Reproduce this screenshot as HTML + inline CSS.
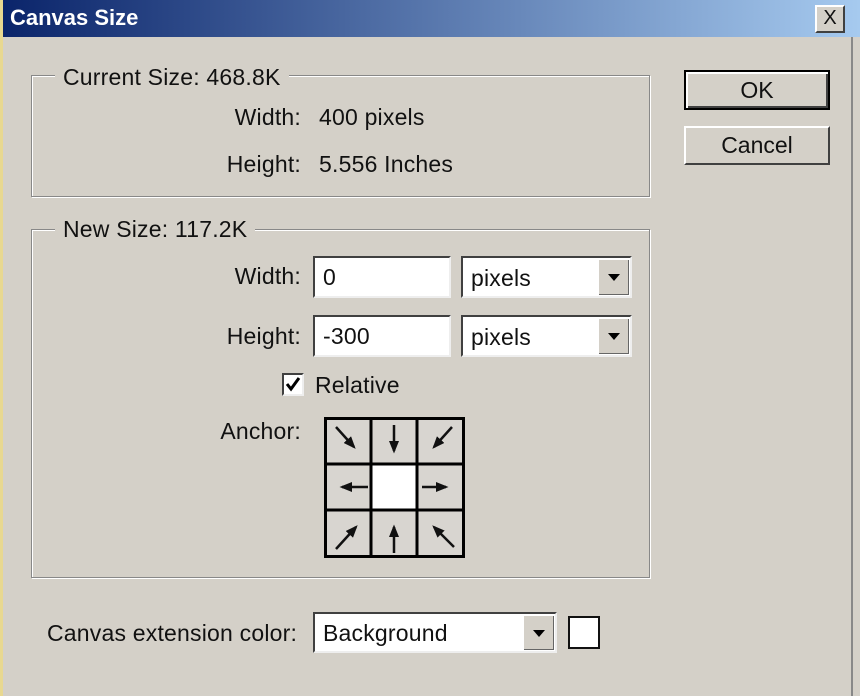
<!DOCTYPE html>
<html><head><style>
body{margin:0;width:860px;height:696px;overflow:hidden;background:#d4d0c8;font-family:"Liberation Sans",sans-serif;color:#111;position:relative}
.a{position:absolute}
.t{position:absolute;font-size:23px;line-height:26px;white-space:nowrap;letter-spacing:0.2px}
.r{text-align:right}
.grp{position:absolute;border:1px solid #888;box-shadow:1px 1px 0 #fff, inset 1px 1px 0 #fff}
.leg{position:absolute;background:#d4d0c8;padding:0 8px;font-size:23px;line-height:26px;white-space:nowrap;letter-spacing:0.2px}
.btn{position:absolute;background:#d4d0c8;border-top:2px solid #fff;border-left:2px solid #fff;border-right:2px solid #404040;border-bottom:2px solid #404040;box-sizing:border-box;font-size:23px;text-align:center}
.inp{position:absolute;background:#fff;border-top:2px solid #404040;border-left:2px solid #404040;border-right:2px solid #eee;border-bottom:2px solid #eee;box-sizing:border-box;font-size:23px;padding-left:8px;letter-spacing:0.2px}
.dd{position:absolute;right:1px;top:1px;bottom:1px;width:30px;background:#d4d0c8;border-left:1px solid #fff;border-top:1px solid #fff;box-shadow:inset -1px -1px 0 #666}
.dd:after{content:"";position:absolute;left:9px;top:14px;border-left:6px solid transparent;border-right:6px solid transparent;border-top:7px solid #000}
</style></head><body>
<div class="a" style="left:0;top:0;width:860px;height:37px;background:linear-gradient(90deg,#0a246a,#a6caef)"></div>
<div class="a" style="left:0;top:0;width:3px;height:696px;background:#e8d890"></div>
<div class="a" style="left:851px;top:37px;width:2px;height:659px;background:#888"></div>
<div class="t" style="left:10px;top:5px;color:#fff;font-weight:bold;font-size:22px;letter-spacing:0">Canvas Size</div>
<div class="btn" style="left:815px;top:5px;width:30px;height:28px;font-size:20px;line-height:22px">X</div>

<div class="grp" style="left:31px;top:75px;width:617px;height:120px"></div>
<div class="leg" style="left:55px;top:64px">Current Size: 468.8K</div>
<div class="t r" style="left:150px;width:151px;top:104px">Width:</div>
<div class="t" style="left:319px;top:104px">400 pixels</div>
<div class="t r" style="left:150px;width:151px;top:151px">Height:</div>
<div class="t" style="left:319px;top:151px">5.556 Inches</div>

<div class="btn" style="left:684px;top:70px;width:146px;height:40px;line-height:36px;border:2px solid #000;box-shadow:inset 2px 2px 0 #fff,inset -2px -2px 0 #404040">OK</div>
<div class="btn" style="left:684px;top:126px;width:146px;height:39px;line-height:35px">Cancel</div>

<div class="grp" style="left:31px;top:229px;width:617px;height:347px"></div>
<div class="leg" style="left:55px;top:216px">New Size: 117.2K</div>
<div class="t r" style="left:150px;width:151px;top:263px">Width:</div>
<div class="inp" style="left:313px;top:256px;width:138px;height:42px;line-height:38px">0</div>
<div class="inp" style="left:461px;top:256px;width:171px;height:42px;line-height:40px">pixels<div class="dd"></div></div>
<div class="t r" style="left:150px;width:151px;top:323px">Height:</div>
<div class="inp" style="left:313px;top:315px;width:138px;height:42px;line-height:38px">-300</div>
<div class="inp" style="left:461px;top:315px;width:171px;height:42px;line-height:40px">pixels<div class="dd"></div></div>
<div class="inp" style="left:282px;top:373px;width:22px;height:23px;padding:0"></div>
<svg class="a" style="left:284px;top:375px" width="18" height="19"><path d="M3 9 L7 14 L15 3" stroke="#000" stroke-width="3" fill="none"/></svg>
<div class="t" style="left:315px;top:372px">Relative</div>
<div class="t r" style="left:150px;width:151px;top:418px">Anchor:</div>

<svg class="a" style="left:324px;top:417px" width="141" height="141">
<rect x="1.5" y="1.5" width="138" height="138" fill="#d8d5d0" stroke="#000" stroke-width="3"/>
<rect x="48" y="48" width="44" height="44" fill="#fff"/>
<path d="M47 0V141M93 0V141M0 47H141M0 93H141" stroke="#000" stroke-width="3"/>
<defs><marker id="m" markerWidth="5" markerHeight="4" refX="4" refY="2" orient="auto"><path d="M0 0L5 2L0 4z" fill="#111"/></marker></defs>
<g stroke="#111" stroke-width="2.5" marker-end="url(#m)">
<line x1="12" y1="10" x2="30" y2="30"/>
<line x1="70" y1="8" x2="70" y2="34"/>
<line x1="128" y1="10" x2="110" y2="30"/>
<line x1="44" y1="70" x2="18" y2="70"/>
<line x1="98" y1="70" x2="122" y2="70"/>
<line x1="12" y1="132" x2="32" y2="110"/>
<line x1="70" y1="136" x2="70" y2="110"/>
<line x1="130" y1="130" x2="110" y2="110"/>
</g></svg>

<div class="t" style="left:47px;top:620px">Canvas extension color:</div>
<div class="inp" style="left:313px;top:612px;width:244px;height:41px;line-height:39px">Background<div class="dd"></div></div>
<div class="a" style="left:568px;top:616px;width:28px;height:29px;background:#fff;border:2px solid #111"></div>
</body></html>
